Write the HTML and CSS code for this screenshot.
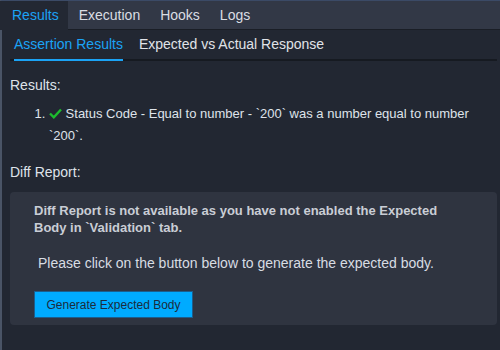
FILE: index.html
```html
<!DOCTYPE html>
<html lang="en">
<head>
  <meta charset="UTF-8">
  <title>Test Results</title>
  <link rel="stylesheet" href="styles.css">
</head>
<body>
  <div class="panel">
    <div class="tabs">
      <div class="tab active">Results</div>
      <div class="tab">Execution</div>
      <div class="tab">Hooks</div>
      <div class="tab">Logs</div>
    </div>

    <div class="content">
      <div class="subtabs">
        <div class="subtab active">Assertion Results</div>
        <div class="subtab">Expected vs Actual Response</div>
      </div>

      <div class="label">Results:</div>
      <ol class="results">
        <li>
          <svg class="check" width="13" height="11" viewBox="0 0 13 11">
            <path d="M1 5.5 L4.8 9.3 L12 1.5" fill="none" stroke="#1dbb2e" stroke-width="2.4"/>
          </svg>
          Status Code - Equal to number - `200` was a number equal to number `200`.
        </li>
      </ol>

      <div class="label diff-label">Diff Report:</div>
      <div class="diff-box">
        <p class="diff-warn">Diff Report is not available as you have not enabled the Expected Body in `Validation` tab.</p>
        <p class="diff-hint">Please click on the button below to generate the expected body.</p>
        <button class="gen-btn">Generate Expected Body</button>
      </div>
    </div>
  </div>
</body>
</html>
```

FILE: styles.css
```css
body {
  margin: 0;
  background-color: #222732;
  font-family: 'Liberation Sans', Arial, sans-serif;
  color: #dfe3ea;
}

.panel {
  height: 350px;
  border-left: 2px solid #4a5466;
  border-top: 1px solid #3b4a66;
  box-sizing: border-box;
}

.tabs {
  display: flex;
  height: 28px;
  background-color: #323846;
  border-bottom: 1px solid #1a1e26;
  margin-left: -2px;
}

.tab {
  padding: 0 9px 0 11px;
  line-height: 28px;
  font-size: 14px;
  color: #dadde3;
}

.tab.active {
  background-color: #232833;
  color: #1ba3f5;
  padding: 0 9px 0 12px;
  margin-bottom: -1px;
}

.content {
  padding: 0 3px 0 8px;
}

.subtabs {
  display: flex;
  gap: 16px;
  padding: 0 4px;
  border-bottom: 2px solid #161a21;
  height: 29px;
}

.subtab {
  font-size: 14px;
  line-height: 29px;
  color: #e0e3e8;
}

.subtab.active {
  color: #1ba3f5;
  border-bottom: 2px solid #1ba3f5;
  margin-bottom: -2px;
}

.label {
  font-size: 14px;
  line-height: 16px;
  margin-top: 16px;
}

.diff-label {
  margin-top: 17px;
}

.results {
  margin: 10px 0 0 0;
  padding-left: 39px;
  font-size: 13px;
  line-height: 22px;
  padding-right: 20px;
}

.check {
  vertical-align: -1px;
}

.diff-box {
  margin-top: 12px;
  background-color: #2f3440;
  border-radius: 4px;
  padding: 10px 24px 8px 24px;
  height: 133px;
  box-sizing: border-box;
}

.diff-warn {
  margin: 0;
  font-size: 13px;
  font-weight: bold;
  line-height: 17px;
  color: #c9cdd5;
  padding-right: 20px;
}

.diff-hint {
  margin: 19px 0 0 4px;
  font-size: 14px;
  line-height: 16px;
  color: #d8dce3;
}

.gen-btn {
  margin-top: 20px;
  background-color: #00abff;
  border: 1px solid #1d5d8c;
  color: #1c2b3c;
  font-family: 'Liberation Sans', Arial, sans-serif;
  font-size: 12px;
  white-space: nowrap;
  padding: 0;
  height: 27px;
  width: 159px;
}
```
